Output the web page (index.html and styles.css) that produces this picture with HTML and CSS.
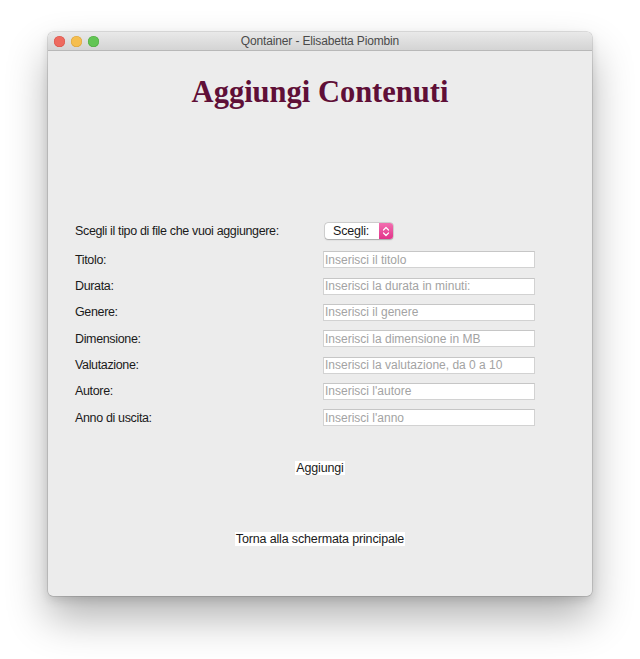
FILE: index.html
```html
<!DOCTYPE html>
<html lang="it">
<head>
<meta charset="utf-8">
<title>Qontainer - Elisabetta Piombin</title>
<link rel="stylesheet" href="styles.css">
</head>
<body>
<div class="desktop">
  <div class="window">
    <div class="titlebar">
      <div class="lights">
        <span class="light red"></span>
        <span class="light yellow"></span>
        <span class="light green"></span>
      </div>
      <div class="title">Qontainer - Elisabetta Piombin</div>
      <div class="spacer"></div>
    </div>
    <div class="content">
      <h1 class="heading">Aggiungi Contenuti</h1>
      <form class="form">
        <label class="label label-combo">Scegli il tipo di file che vuoi aggiungere:</label>
        <div class="combo">
          <span class="combo-text">Scegli:</span>
          <span class="combo-arrows">
            <svg width="8" height="11" viewBox="0 0 8 11"><path d="M1.5 4 L4 1.5 L6.5 4 M1.5 7 L4 9.5 L6.5 7" fill="none" stroke="#fff" stroke-width="1.2" stroke-linecap="round" stroke-linejoin="round"/></svg>
          </span>
        </div>
        <label class="label">Titolo:</label>
        <input class="field" type="text" placeholder="Inserisci il titolo">
        <label class="label">Durata:</label>
        <input class="field" type="text" placeholder="Inserisci la durata in minuti:">
        <label class="label">Genere:</label>
        <input class="field" type="text" placeholder="Inserisci il genere">
        <label class="label">Dimensione:</label>
        <input class="field" type="text" placeholder="Inserisci la dimensione in MB">
        <label class="label">Valutazione:</label>
        <input class="field" type="text" placeholder="Inserisci la valutazione, da 0 a 10">
        <label class="label">Autore:</label>
        <input class="field" type="text" placeholder="Inserisci l'autore">
        <label class="label">Anno di uscita:</label>
        <input class="field" type="text" placeholder="Inserisci l'anno">
      </form>
      <div class="actions">
        <button class="btn" type="button">Aggiungi</button>
      </div>
      <div class="actions back">
        <button class="btn" type="button">Torna alla schermata principale</button>
      </div>
    </div>
  </div>
</div>
</body>
</html>
```
FILE: styles.css
```css
* { box-sizing: border-box; }

html, body {
  margin: 0;
  padding: 0;
  background: #ffffff;
}

body {
  font-family: "Liberation Sans", Arial, sans-serif;
  width: 640px;
  height: 659px;
  overflow: hidden;
}

.desktop {
  padding: 32px 48px 0 48px;
}

.window {
  width: 544px;
  height: 564px;
  border-radius: 5px;
  background: #ececec;
  box-shadow: 0 0 0 0.5px rgba(0,0,0,0.22), 0 22px 42px rgba(0,0,0,0.30), 0 4px 10px rgba(0,0,0,0.12);
  overflow: hidden;
  display: flex;
  flex-direction: column;
}

.titlebar {
  height: 19px;
  flex: none;
  display: grid;
  grid-template-columns: 1fr auto 1fr;
  align-items: center;
  background: linear-gradient(#e9e9e9, #d4d4d4);
  border-bottom: 1px solid #b8b8b8;
}

.lights {
  display: flex;
  gap: 6px;
  padding-left: 6px;
  align-items: center;
}

.light {
  width: 11px;
  height: 11px;
  border-radius: 50%;
  display: block;
}
.red { background: #ee6a5f; box-shadow: inset 0 0 0 0.5px #d95248; }
.yellow { background: #f5be4f; box-shadow: inset 0 0 0 0.5px #d9a23a; }
.green { background: #62c554; box-shadow: inset 0 0 0 0.5px #4ea93f; }

.title {
  font-size: 12px;
  letter-spacing: -0.15px;
  color: #4a4a4a;
  line-height: 18px;
}

.content {
  flex: 1;
  display: flex;
  flex-direction: column;
}

.heading {
  margin: 23px 0 0 0;
  text-align: center;
  font-family: "Liberation Serif", "Times New Roman", serif;
  font-weight: bold;
  font-size: 30.5px;
  line-height: 36px;
  color: #5f0f37;
}

.form {
  margin: 113px 0 0 27px;
  display: grid;
  grid-template-columns: 248px 212px;
  grid-template-rows: 19px repeat(7, 17px);
  row-gap: 9.33px;
  align-items: center;
}

.label {
  font-size: 12.5px;
  letter-spacing: -0.35px;
  color: #1a1a1a;
  line-height: 16px;
}

.label-combo {
  align-self: start;
}

.combo {
  align-self: start;
  margin-left: 2px;
  width: 68px;
  height: 16px;
  border-radius: 3px;
  background: #ffffff;
  box-shadow: 0 0 0 0.5px rgba(0,0,0,0.18), 0 0.5px 1.5px rgba(0,0,0,0.22);
  display: flex;
  align-items: center;
  justify-content: space-between;
}

.combo-text {
  font-size: 12.5px;
  letter-spacing: -0.2px;
  color: #1a1a1a;
  padding-left: 8px;
  line-height: 16px;
}

.combo-arrows {
  width: 14px;
  height: 16px;
  border-radius: 0 3px 3px 0;
  background: linear-gradient(#f26fb0, #e2348a);
  display: flex;
  align-items: center;
  justify-content: center;
}

.combo-arrows svg { display: block; }

.field {
  width: 212px;
  height: 17px;
  margin: 0;
  padding: 0 0 0 1px;
  border: 1px solid #d2d2d2;
  border-top-color: #c6c6c6;
  background: #ffffff;
  font-family: "Liberation Sans", Arial, sans-serif;
  font-size: 12px;
  color: #1a1a1a;
  outline: none;
}

.field::placeholder {
  color: #a3a3a3;
  opacity: 1;
}

.actions {
  display: flex;
  justify-content: center;
  margin-top: 35px;
}

.back {
  margin-top: 57px;
}

.btn {
  margin: 0;
  padding: 0 1px;
  border: none;
  border-radius: 0;
  background: #ffffff;
  font-family: "Liberation Sans", Arial, sans-serif;
  font-size: 12.5px;
  letter-spacing: -0.15px;
  color: #1a1a1a;
  line-height: 14px;
  height: 14px;
}
```
